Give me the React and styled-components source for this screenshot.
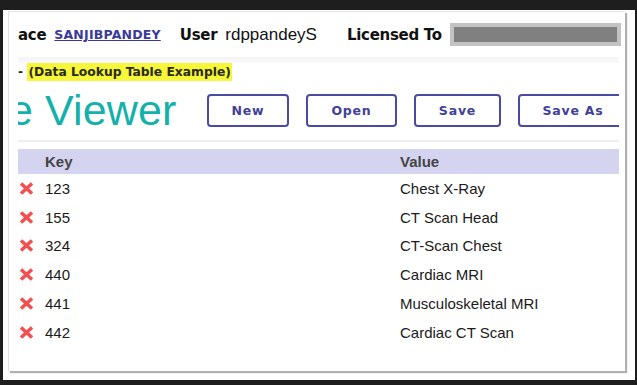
import styled, { createGlobalStyle } from "styled-components";

const GlobalStyle = createGlobalStyle`
  html, body {
    margin: 0;
    padding: 0;
    background: #1e1e1e;
  }
`;

const Frame = styled.div`
  margin: 10px 2px 0 3px;
  width: 632px;
  height: 370px;
  background: #ffffff;
  padding: 1px 0 0 5px;
  box-sizing: border-box;
`;

const Panel = styled.div`
  width: 617px;
  height: 360px;
  box-sizing: border-box;
  background: #fff;
  border-top: 1px solid #e4e4e4;
  border-left: 1px solid #e4e4e4;
  box-shadow: 2px 2px 1px #b0b0b0;
  padding: 0 6px 0 9px;
  overflow: hidden;
  display: flex;
  flex-direction: column;
`;

const TopBar = styled.div`
  display: flex;
  align-items: center;
  height: 23px;
  margin-top: 11px;
  font-family: "Liberation Sans", Arial, sans-serif;
  font-size: 17px;
  color: #111;
  white-space: nowrap;
`;

const Label = styled.span`
  font-family: "DejaVu Sans", Verdana, sans-serif;
  font-weight: bold;
  font-size: 15px;
  margin-right: ${(p) => p.$gap || 8}px;
  letter-spacing: -0.3px;
`;

const Plain = styled.span`
  margin-right: ${(p) => p.$gap || 0}px;
`;

const WorkspaceLink = styled.a`
  font-family: "DejaVu Sans", Verdana, sans-serif;
  font-weight: bold;
  font-size: 12.5px;
  color: #3a3a9c;
  text-decoration: underline;
  margin-right: 19px;
  letter-spacing: 0.2px;
`;

const Redacted = styled.div`
  width: 171px;
  height: 23px;
  box-sizing: border-box;
  border: 4px solid #c3c3c3;
  background: #808080;
  flex-shrink: 0;
`;

const Band = styled.div`
  height: 6px;
  margin-top: 11px;
  background: linear-gradient(to bottom, #f4f4f4, #fafafa);
`;

const SubTitle = styled.div`
  font-family: "DejaVu Sans", Verdana, sans-serif;
  font-weight: bold;
  font-size: 12.3px;
  color: #2a2a10;
  height: 19px;
  line-height: 19px;
`;

const Highlight = styled.span`
  background: #f6f63a;
  padding: 2px 1px;
`;

const TitleRow = styled.div`
  display: flex;
  align-items: center;
  height: 56px;
  overflow: hidden;
`;

const TitleClip = styled.div`
  width: 189px;
  overflow: hidden;
  flex-shrink: 0;
`;

const Title = styled.div`
  font-family: "Liberation Sans", Arial, sans-serif;
  font-size: 43px;
  color: #14b1aa;
  margin-left: -9px;
  white-space: nowrap;
  letter-spacing: 0.1px;
`;

const Buttons = styled.div`
  display: flex;
  gap: 17px;
  flex-shrink: 0;
`;

const Button = styled.button`
  width: ${(p) => p.$w}px;
  height: 33px;
  box-sizing: border-box;
  border: 2px solid #4a4aa2;
  border-radius: 4px;
  background: #fff;
  color: #40409a;
  font-family: "DejaVu Sans", Verdana, sans-serif;
  font-weight: bold;
  font-size: 12.5px;
  letter-spacing: 0.8px;
  padding: 0;
  flex-shrink: 0;
`;

const Divider = styled.div`
  height: 2px;
  margin-top: 2px;
  background: #efefef;
`;

const Table = styled.div`
  margin-top: 7px;
  font-family: "Liberation Sans", Arial, sans-serif;
  font-size: 15px;
  color: #1a1a1a;
`;

const HeadRow = styled.div`
  display: grid;
  grid-template-columns: 27px 355px 1fr;
  height: 25px;
  align-items: center;
  background: #d4d4f0;
  font-weight: bold;
  color: #444;
`;

const Row = styled.div`
  display: grid;
  grid-template-columns: 27px 355px 1fr;
  height: 28.8px;
  align-items: center;
`;

const Del = styled.span`
  display: flex;
  align-items: center;
  padding-left: 1px;
`;

function Cross() {
  return (
    <svg width="15" height="13" viewBox="0 0 15 13">
      <path
        d="M2 1.5 L13 11.5 M13 1.5 L2 11.5"
        stroke="#f05050"
        strokeWidth="3.6"
        strokeLinecap="butt"
      />
    </svg>
  );
}

const rows = [
  ["123", "Chest X-Ray"],
  ["155", "CT Scan Head"],
  ["324", "CT-Scan Chest"],
  ["440", "Cardiac MRI"],
  ["441", "Musculoskeletal MRI"],
  ["442", "Cardiac CT Scan"],
];

export default function App() {
  return (
    <>
      <GlobalStyle />
      <Frame>
        <Panel>
          <TopBar>
            <Label>ace</Label>
            <WorkspaceLink href="#">SANJIBPANDEY</WorkspaceLink>
            <Label>User</Label>
            <Plain $gap={30}>rdppandeyS</Plain>
            <Label>Licensed To</Label>
            <Redacted />
          </TopBar>
          <Band />
          <SubTitle>
            - <Highlight>(Data Lookup Table Example)</Highlight>
          </SubTitle>
          <TitleRow>
            <TitleClip>
              <Title>e Viewer</Title>
            </TitleClip>
            <Buttons>
              <Button $w={82}>New</Button>
              <Button $w={91}>Open</Button>
              <Button $w={87}>Save</Button>
              <Button $w={110}>Save As</Button>
            </Buttons>
          </TitleRow>
          <Divider />
          <Table>
            <HeadRow>
              <span />
              <span>Key</span>
              <span>Value</span>
            </HeadRow>
            {rows.map(([k, v]) => (
              <Row key={k}>
                <Del>
                  <Cross />
                </Del>
                <span>{k}</span>
                <span>{v}</span>
              </Row>
            ))}
          </Table>
        </Panel>
      </Frame>
    </>
  );
}
